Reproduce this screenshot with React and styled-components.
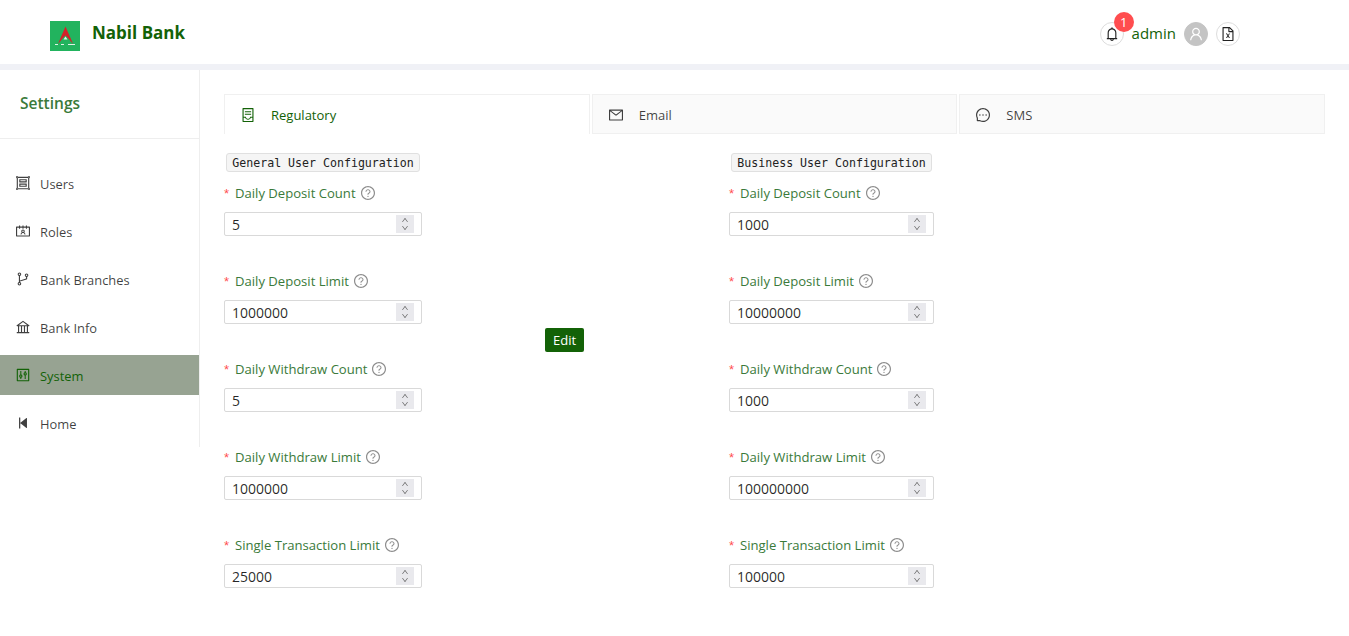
import React from 'react';
import styled, { createGlobalStyle } from 'styled-components';
import {
  AiOutlineBank,
  AiOutlineBell,
  AiOutlineBranches,
  AiOutlineContacts,
  AiOutlineContainer,
  AiOutlineControl,
  AiOutlineDown,
  AiOutlineFileExcel,
  AiOutlineGroup,
  AiOutlineMail,
  AiOutlineMessage,
  AiOutlineQuestionCircle,
  AiOutlineStepBackward,
  AiOutlineUp,
  AiOutlineUser,
} from 'react-icons/ai';

const GlobalStyle = createGlobalStyle`
  html, body {
    margin: 0;
    padding: 0;
    background: #fff;
  }
  body {
    font-family: 'Open Sans', 'Noto Sans', sans-serif;
    font-size: 14px;
    color: rgba(0, 0, 0, 0.85);
  }
  * {
    box-sizing: border-box;
  }
`;

const Page = styled.div`
  min-height: 636px;
  overflow: hidden;
`;

// Top bar
const Header = styled.header`
  height: 70px;
  border-bottom: 6px solid #f0f1f6;
  display: flex;
  align-items: center;
  padding: 0 109px 0 50px;
`;

const Logo = styled.svg`
  width: 30px;
  height: 30px;
  flex: none;
  margin-top: 8px;
`;

const Brand = styled.div`
  margin: 0 0 0 12px;
  font-size: 17px;
  font-weight: 700;
  color: #136207;
`;

const HeaderRight = styled.div`
  margin: 4px 0 0 auto;
  display: flex;
  align-items: center;
`;

const RoundIcon = styled.span`
  position: relative;
  width: 24px;
  height: 24px;
  border-radius: 50%;
  border: 1px solid ${(p) => (p.$filled ? '#c4c4c4' : '#ddd')};
  background: ${(p) => (p.$filled ? '#c4c4c4' : '#fff')};
  color: ${(p) => (p.$filled ? '#fff' : '#222')};
  display: flex;
  align-items: center;
  justify-content: center;
  font-size: 16px;
`;

const Badge = styled.span`
  position: absolute;
  top: -11px;
  left: 13px;
  width: 20px;
  height: 20px;
  border-radius: 50%;
  background: #ff4d4f;
  color: #fff;
  font-size: 13px;
  line-height: 20px;
  text-align: center;
`;

const AdminName = styled.span`
  margin: 0 8px 2px;
  font-size: 15px;
  color: #136207;
`;

const ProfileIcon = styled(RoundIcon)`
  margin-right: 8px;
`;

// Body
const Body = styled.div`
  display: flex;
  align-items: flex-start;
`;

const Sidebar = styled.aside`
  width: 200px;
  flex: none;
  height: 377px;
  border-right: 1px solid #eee;
`;

const SidebarTitle = styled.div`
  height: 69px;
  border-bottom: 1px solid #eee;
  padding: 22px 0 0 20px;
  font-size: 15.5px;
  font-weight: 600;
  color: #3a7a3a;
`;

const Menu = styled.nav`
  margin-top: 24px;
  display: flex;
  flex-direction: column;
  gap: 8px;
`;

const MenuItem = styled.div`
  height: 40px;
  display: flex;
  align-items: center;
  gap: 9px;
  padding-left: 15px;
  font-size: 12.9px;
  background: ${(p) => (p.$active ? '#97a392' : 'transparent')};
  color: ${(p) => (p.$active ? '#136207' : 'rgba(0, 0, 0, 0.75)')};

  svg {
    font-size: 16px;
    flex: none;
  }
`;

const MenuLabel = styled.span`
  padding-top: 2px;
`;

const Content = styled.main`
  flex: 1;
  padding: 24px 24px 0;
`;

const Tabs = styled.div`
  display: flex;
  gap: 2px;
  height: 40px;
`;

const Tab = styled.div`
  flex: 1;
  display: flex;
  align-items: center;
  gap: 15px;
  padding-left: 15px;
  font-size: 13px;
  border: 1px solid #f0f0f0;
  border-bottom: none;
  box-shadow: ${(p) => (p.$active ? 'none' : 'inset 0 -1px 0 #f0f0f0')};
  background: ${(p) => (p.$active ? '#fff' : '#fafafa')};
  color: ${(p) => (p.$active ? '#136207' : 'rgba(0, 0, 0, 0.75)')};

  svg {
    font-size: 16px;
    flex: none;
  }
`;

const FormGrid = styled.div`
  display: grid;
  grid-template-columns: 321px 184px 1fr;
  margin-top: 19px;
`;

const Column = styled.div`
  display: flex;
  flex-direction: column;
  width: ${(p) => p.$width}px;
`;

const Tag = styled.code`
  align-self: center;
  display: block;
  height: 19px;
  padding: 0 5px;
  background: #f5f5f5;
  border: 1px solid #e0e0e0;
  border-radius: 3px;
  font-family: 'DejaVu Sans Mono', 'Liberation Mono', monospace;
  font-size: 11.6px;
  font-weight: 400;
  line-height: 19px;
  white-space: nowrap;
  color: #222;
`;

const Field = styled.div`
  margin-top: ${(p) => (p.$first ? '11px' : '35px')};
`;

const Label = styled.label`
  display: flex;
  align-items: center;
  height: 20px;
  margin-bottom: 9px;
  color: #3a7a3a;
  font-size: 13.1px;
  white-space: nowrap;
`;

const Required = styled.span`
  color: #ff4d4f;
  width: 11px;
  font-family: 'Liberation Sans', sans-serif;
`;

const Help = styled(AiOutlineQuestionCircle)`
  margin-left: 4px;
  font-size: 16px;
  color: rgba(0, 0, 0, 0.45);
`;

const InputBox = styled.div`
  display: flex;
  align-items: center;
  height: 24px;
  padding: 0 7px;
  border: 1px solid #d9d9d9;
  border-radius: 2px;
`;

const NumberInput = styled.input`
  flex: 1;
  min-width: 0;
  height: 22px;
  padding: 0;
  border: none;
  font-family: inherit;
  font-size: 14px;
  color: rgba(0, 0, 0, 0.85);
  outline: none;
`;

const Spinner = styled.span`
  width: 18px;
  height: 18px;
  flex: none;
  background: #e9e9ed;
  display: flex;
  flex-direction: column;
  align-items: center;
  justify-content: center;
  font-size: 10px;
  color: #666;

  svg {
    height: 8px;
  }
`;

const EditButton = styled.button`
  align-self: start;
  justify-self: start;
  margin-top: 175px;
  width: 39px;
  height: 24px;
  border: none;
  border-radius: 2px;
  padding: 0;
  background: #136207;
  color: #fff;
  font-family: inherit;
  font-size: 13px;
`;

const menu = [
  { label: 'Users', Icon: AiOutlineGroup },
  { label: 'Roles', Icon: AiOutlineContacts },
  { label: 'Bank Branches', Icon: AiOutlineBranches },
  { label: 'Bank Info', Icon: AiOutlineBank },
  { label: 'System', Icon: AiOutlineControl, active: true },
  { label: 'Home', Icon: AiOutlineStepBackward },
];

const tabs = [
  { label: 'Regulatory', Icon: AiOutlineContainer, active: true },
  { label: 'Email', Icon: AiOutlineMail },
  { label: 'SMS', Icon: AiOutlineMessage },
];

const labels = [
  'Daily Deposit Count',
  'Daily Deposit Limit',
  'Daily Withdraw Count',
  'Daily Withdraw Limit',
  'Single Transaction Limit',
];

const generalValues = [5, 1000000, 5, 1000000, 25000];
const businessValues = [1000, 10000000, 1000, 100000000, 100000];

const ConfigColumn = ({ title, values, width }) => (
  <Column $width={width}>
    <Tag>{title}</Tag>
    {labels.map((label, i) => (
      <Field key={label} $first={i === 0}>
        <Label>
          <Required>*</Required>
          {label}
          <Help />
        </Label>
        <InputBox>
          <NumberInput type="text" defaultValue={values[i]} />
          <Spinner>
            <AiOutlineUp />
            <AiOutlineDown />
          </Spinner>
        </InputBox>
      </Field>
    ))}
  </Column>
);

const App = () => (
  <Page>
    <GlobalStyle />
    <Header>
      <Logo viewBox="0 0 30 30">
        <rect width="30" height="30" fill="#22b35e" />
        <path d="M15.500 5.500 L20.500 17 L23 23 L18 17 L15.500 14.500 L13 17 L8 23 L10.500 17 Z" fill="#d3202a" />
        <path d="M15.500 15.500 L17.500 18.500 L13.500 18.500 Z" fill="#dff3e6" />
        <path d="M5 23.500 H8 M11 23.500 H14 M18 23.500 H25" stroke="#dff3e6" strokeWidth="1" />
      </Logo>
      <Brand>Nabil Bank</Brand>
      <HeaderRight>
        <RoundIcon>
          <AiOutlineBell />
          <Badge>1</Badge>
        </RoundIcon>
        <AdminName>admin</AdminName>
        <ProfileIcon $filled>
          <AiOutlineUser />
        </ProfileIcon>
        <RoundIcon>
          <AiOutlineFileExcel />
        </RoundIcon>
      </HeaderRight>
    </Header>
    <Body>
      <Sidebar>
        <SidebarTitle>Settings</SidebarTitle>
        <Menu>
          {menu.map(({ label, Icon, active }) => (
            <MenuItem key={label} $active={active}>
              <Icon />
              <MenuLabel>{label}</MenuLabel>
            </MenuItem>
          ))}
        </Menu>
      </Sidebar>
      <Content>
        <Tabs>
          {tabs.map(({ label, Icon, active }) => (
            <Tab key={label} $active={active}>
              <Icon />
              {label}
            </Tab>
          ))}
        </Tabs>
        <FormGrid>
          <ConfigColumn title="General User Configuration" values={generalValues} width={198} />
          <EditButton>Edit</EditButton>
          <ConfigColumn title="Business User Configuration" values={businessValues} width={205} />
        </FormGrid>
      </Content>
    </Body>
  </Page>
);

export default App;
